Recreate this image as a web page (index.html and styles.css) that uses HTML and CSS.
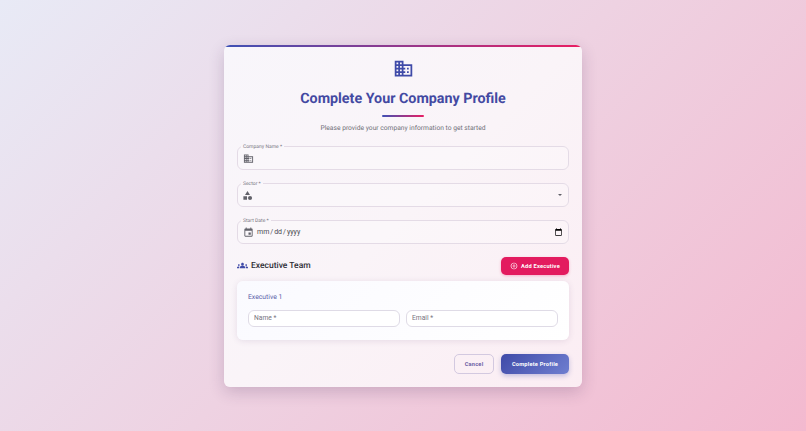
FILE: index.html
```html
<!DOCTYPE html>
<html lang="en">
<head>
    <meta charset="UTF-8">
    <meta name="viewport" content="width=device-width, initial-scale=1.0">
    <title>Complete Your Company Profile</title>
    <link rel="stylesheet" href="styles.css">
</head>
<body>

<form class="profile-card">
    <!-- Header -->
    <div class="card-header">
        <svg class="header-icon" viewBox="0 0 24 24"><path d="M12 7V3H2v18h20V7H12zM6 19H4v-2h2v2zm0-4H4v-2h2v2zm0-4H4V9h2v2zm0-4H4V5h2v2zm4 12H8v-2h2v2zm0-4H8v-2h2v2zm0-4H8V9h2v2zm0-4H8V5h2v2zm10 12h-8v-2h2v-2h-2v-2h2v-2h-2V9h8v10zm-2-8h-2v2h2v-2zm0 4h-2v2h2v-2z"/></svg>
        <h1>Complete Your Company Profile</h1>
        <div class="title-rule"></div>
        <p>Please provide your company information to get started</p>
    </div>

    <!-- Company fields -->
    <fieldset class="field">
        <legend>Company Name *</legend>
        <svg class="field-icon" viewBox="0 0 24 24"><path d="M12 7V3H2v18h20V7H12zM6 19H4v-2h2v2zm0-4H4v-2h2v2zm0-4H4V9h2v2zm0-4H4V5h2v2zm4 12H8v-2h2v2zm0-4H8v-2h2v2zm0-4H8V9h2v2zm0-4H8V5h2v2zm10 12h-8v-2h2v-2h-2v-2h2v-2h-2V9h8v10zm-2-8h-2v2h2v-2zm0 4h-2v2h2v-2z"/></svg>
        <input type="text" class="field-input">
    </fieldset>

    <fieldset class="field">
        <legend>Sector *</legend>
        <svg class="field-icon sector-icon" viewBox="0 0 24 24"><path d="M12 2l-5.5 9h11z"/><circle cx="17.5" cy="17.5" r="4.5"/><path d="M3 13.5h8v8H3z"/></svg>
        <div class="field-input"></div>
        <span class="caret"></span>
    </fieldset>

    <fieldset class="field">
        <legend>Start Date *</legend>
        <svg class="field-icon" viewBox="0 0 24 24"><path d="M17 12h-5v5h5v-5zM16 1v2H8V1H6v2H5c-1.11 0-1.99.9-1.99 2L3 19c0 1.1.89 2 2 2h14c1.1 0 2-.9 2-2V5c0-1.1-.9-2-2-2h-1V1h-2zm3 18H5V8h14v11z"/></svg>
        <input type="date" class="field-input date-input">
    </fieldset>

    <!-- Executive team -->
    <div class="team-header">
        <div class="team-title">
            <svg class="team-icon" viewBox="0 0 24 24"><path d="M12 12.75c1.63 0 3.07.39 4.24.9 1.08.48 1.76 1.56 1.76 2.73V18H6v-1.61c0-1.18.68-2.26 1.76-2.73 1.17-.52 2.61-.91 4.24-.91zM4 13c1.1 0 2-.9 2-2s-.9-2-2-2-2 .9-2 2 .9 2 2 2zm1.13 1.1c-.37-.06-.74-.1-1.13-.1-.99 0-1.93.21-2.78.58C.48 14.9 0 15.62 0 16.43V18h4.5v-1.61c0-.83.23-1.61.63-2.29zM20 13c1.1 0 2-.9 2-2s-.9-2-2-2-2 .9-2 2 .9 2 2 2zm4 3.43c0-.81-.48-1.53-1.22-1.85-.85-.37-1.79-.58-2.78-.58-.39 0-.76.04-1.13.1.4.68.63 1.46.63 2.29V18H24v-1.57zM12 6c1.66 0 3 1.34 3 3s-1.34 3-3 3-3-1.34-3-3 1.34-3 3-3z"/></svg>
            <h2>Executive Team</h2>
        </div>
        <button type="button" class="btn btn-add">
            <svg viewBox="0 0 24 24"><path d="M13 7h-2v4H7v2h4v4h2v-4h4v-2h-4V7zm-1-5C6.48 2 2 6.48 2 12s4.48 10 10 10 10-4.48 10-10S17.52 2 12 2zm0 18c-4.41 0-8-3.59-8-8s3.59-8 8-8 8 3.59 8 8-3.59 8-8 8z"/></svg>
            Add Executive
        </button>
    </div>

    <div class="exec-card">
        <h3>Executive 1</h3>
        <div class="exec-row">
            <input type="text" class="exec-input" placeholder="Name *">
            <input type="email" class="exec-input" placeholder="Email *">
        </div>
    </div>

    <!-- Actions -->
    <div class="actions">
        <button type="button" class="btn btn-cancel">Cancel</button>
        <button type="button" class="btn btn-submit">Complete Profile</button>
    </div>
</form>

</body>
</html>
```

FILE: styles.css
```css
* {
    box-sizing: border-box;
}
body {
    font-family: 'Roboto', sans-serif;
    text-rendering: geometricPrecision;
    background: linear-gradient(135deg, #e8eaf6 0%, #eed2e2 50%, #f3b9cf 100%);
    margin: 0;
    padding: 0;
    display: flex;
    justify-content: center;
    align-items: center;
    height: 100vh;
    overflow: hidden;
}
.profile-card {
    position: relative;
    width: 358px;
    height: 342px;
    padding: 13px 13px 0;
    background: linear-gradient(135deg, #f8f6fb 0%, #faf4f8 50%, #fbedf3 100%);
    border-radius: 6px;
    box-shadow: 0 5px 16px rgba(60, 30, 80, 0.2);
    overflow: hidden;
}
.profile-card::before {
    content: "";
    position: absolute;
    top: 0;
    left: 0;
    right: 0;
    height: 2.5px;
    background: linear-gradient(90deg, #3f51b5, #e91e63);
}
.card-header {
    display: flex;
    flex-direction: column;
    align-items: center;
}
.header-icon {
    width: 21px;
    height: 21px;
    fill: #3f4aa8;
}
.card-header h1 {
    margin: 10px 0 0;
    font-size: 14.3px;
    line-height: 20px;
    font-weight: 700;
    color: #4349a2;
}
.title-rule {
    width: 42px;
    height: 2px;
    margin-top: 6px;
    background: linear-gradient(90deg, #3f51b5, #e91e63);
    border-radius: 1px;
}
.card-header p {
    margin: 5px 0 0;
    font-size: 6.7px;
    line-height: 12px;
    color: #6f6f78;
}
.field {
    display: flex;
    align-items: center;
    gap: 2px;
    height: 26px;
    margin: 10px 0 0;
    padding: 0 5px 2px 6px;
    min-width: 0;
    background: rgba(255, 255, 255, 0.25);
    border: 1px solid #e4dbe6;
    border-radius: 6px;
}
.field + .field {
    margin-top: 11px;
}
.field legend {
    margin-left: -3px;
    padding: 0 2px;
    font-size: 5px;
    line-height: 6px;
    color: #77757f;
}
.field-icon {
    flex: none;
    width: 11px;
    height: 11px;
    margin-left: -1px;
    fill: #62626a;
}
.sector-icon {
    margin-left: -2px;
}
.field-input {
    flex: 1;
    min-width: 0;
    height: 16px;
    padding: 0;
    border: none;
    outline: none;
    background: transparent;
    font-family: 'Roboto', sans-serif;
    font-size: 7px;
    color: #4a4a50;
}
.date-input::-webkit-calendar-picker-indicator {
    width: 9px;
    height: 9px;
    padding: 0;
    margin: 0;
}
.caret {
    width: 0;
    height: 0;
    margin-right: 1px;
    border-left: 2.5px solid transparent;
    border-right: 2.5px solid transparent;
    border-top: 2.5px solid #5f5f66;
}
.team-header {
    display: flex;
    justify-content: space-between;
    align-items: center;
    margin-top: 13px;
}
.team-title {
    display: flex;
    align-items: center;
    gap: 3px;
}
.team-icon {
    width: 11px;
    height: 11px;
    fill: #3f4aa8;
}
.team-title h2 {
    margin: 0;
    font-size: 8.5px;
    font-weight: 500;
    color: #2e2e36;
}
.btn {
    display: inline-flex;
    justify-content: center;
    align-items: center;
    font-family: 'Roboto', sans-serif;
    font-size: 5.7px;
    font-weight: 700;
    letter-spacing: 0.2px;
    border-radius: 5px;
    cursor: pointer;
}
.btn-add {
    width: 68px;
    height: 18px;
    gap: 3px;
    padding: 0;
    border: none;
    color: #ffffff;
    background-color: #e31b5f;
    box-shadow: 0 1px 3px rgba(233, 30, 99, 0.3);
}
.btn-add svg {
    width: 8px;
    height: 8px;
    fill: #ffffff;
}
.exec-card {
    height: 59px;
    margin-top: 6px;
    padding: 11px 11px;
    background: linear-gradient(135deg, #fafaff, #ffffff);
    border-radius: 6px;
    box-shadow: 0 1px 6px rgba(80, 50, 110, 0.12);
}
.exec-card h3 {
    margin: 0;
    font-size: 6.8px;
    line-height: 10px;
    font-weight: 400;
    color: #5a5da8;
}
.exec-row {
    display: grid;
    grid-template-columns: 1fr 1fr;
    gap: 6px;
    margin-top: 8px;
}
.exec-input {
    width: 100%;
    height: 17px;
    padding: 0 5px;
    background: #ffffff;
    border: 1px solid #dfdbe6;
    border-radius: 6px;
    outline: none;
    font-family: 'Roboto', sans-serif;
    font-size: 6.7px;
}
.exec-input::placeholder {
    color: #77757f;
    opacity: 1;
}
.actions {
    display: flex;
    justify-content: flex-end;
    gap: 7px;
    margin-top: 14px;
}
.btn-cancel {
    width: 40px;
    height: 20px;
    padding: 0;
    background: transparent;
    border: 1px solid #d3c9e0;
    color: #6d5fa5;
}
.btn-submit {
    width: 68px;
    height: 20px;
    padding: 0;
    border: none;
    color: #ffffff;
    background: linear-gradient(135deg, #3f4aa8, #6f7fd0);
    box-shadow: 0 2px 5px rgba(63, 74, 168, 0.3);
}
```
